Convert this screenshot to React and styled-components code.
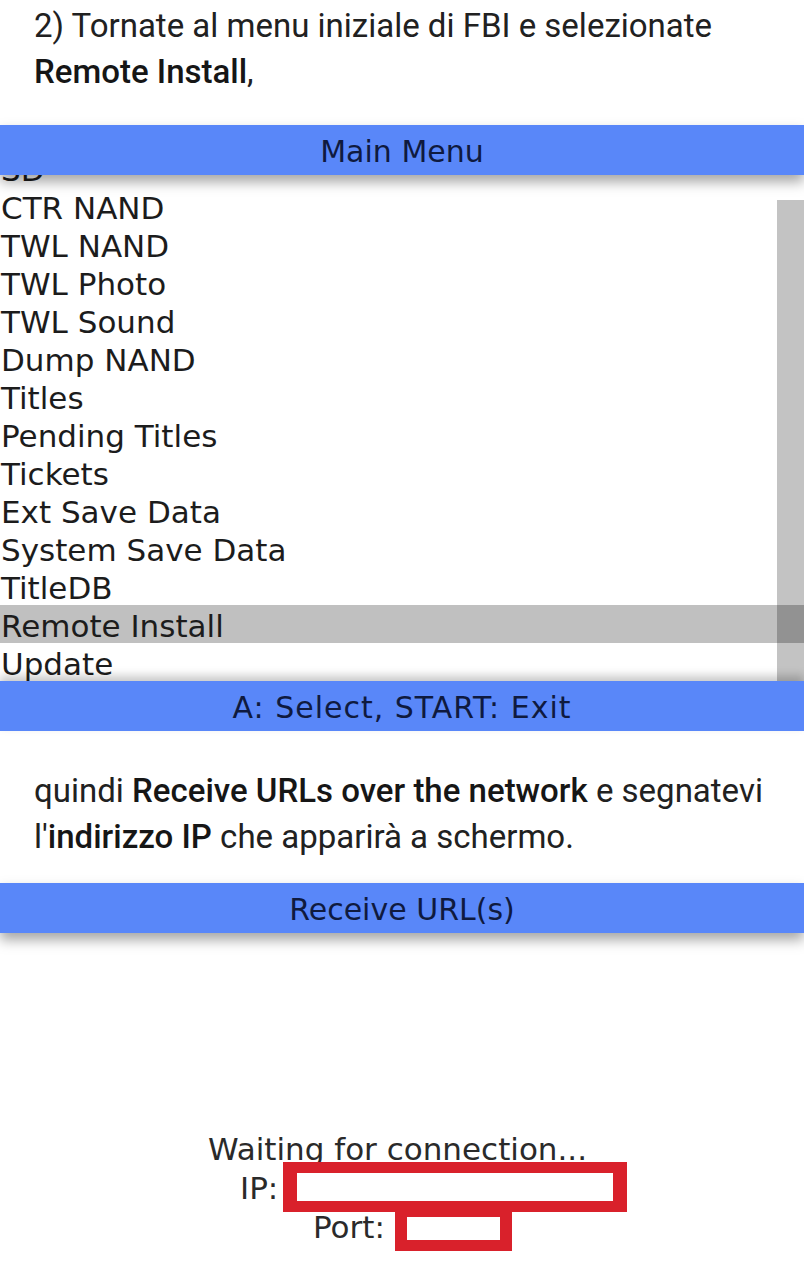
import React from "react";
import styled, { createGlobalStyle } from "styled-components";

const Global = createGlobalStyle`
  html, body { margin: 0; padding: 0; background: #fff; }
  body { width: 804px; overflow: hidden; font-family: Roboto, "Noto Sans", sans-serif; }
`;

const Page = styled.div`
  width: 804px;
  display: flex;
  flex-direction: column;
`;

const Para = styled.p`
  margin: ${(p) => p.$mt}px 0 ${(p) => p.$mb}px;
  padding: 0 10px 0 34px;
  font-size: 33px;
  line-height: 46px;
  color: #212121;
  white-space: nowrap;
  b { font-weight: 500; color: #161616; }
`;

const Screen = styled.div`
  display: flex;
  flex-direction: column;
  font-family: "DejaVu Sans", Verdana, sans-serif;
`;

const Bar = styled.div`
  position: relative;
  z-index: 2;
  height: 50px;
  background: #5987f9;
  color: #0f1a3f;
  font-size: 30px;
  line-height: 50px;
  padding-top: 2px;
  box-sizing: border-box;
  text-align: center;
  letter-spacing: ${(p) => p.$ls || 0}px;
  box-shadow: ${(p) =>
    p.$up ? "0 -5px 9px rgba(0,0,0,0.22)" : "0 7px 12px rgba(0,0,0,0.35)"};
`;

const Viewport = styled.div`
  height: 506px;
  display: flex;
  overflow: hidden;
  background: #fff;
`;

const Rows = styled.div`
  flex: 1;
  overflow: hidden;
`;

const RowList = styled.div`
  margin-top: -26px;
`;

const Row = styled.div`
  height: 38px;
  box-sizing: border-box;
  padding: 5px 0 0 1px;
  font-size: 31px;
  line-height: 33px;
  color: #1c1c1c;
  white-space: nowrap;
  background: ${(p) => (p.$sel ? "#c0c0c0" : "transparent")};
`;

const Track = styled.div`
  width: 27px;
  margin-top: 25px;
  background: #c3c3c3;
  display: flex;
  flex-direction: column;
`;

const Thumb = styled.div`
  margin-top: ${(p) => p.$top}px;
  height: ${(p) => p.$h}px;
  background: #929292;
`;

const Body = styled.div`
  height: 346px;
  background: #fff;
  display: flex;
  flex-direction: column;
  justify-content: flex-end;
`;

const Status = styled.div`
  position: relative;
  height: 149px;
  font-size: 31px;
  line-height: 39px;
  color: #2a2a2a;
`;

const Line = styled.div`
  padding-left: ${(p) => p.$x}px;
  white-space: nowrap;
`;

const Mark = styled.div`
  position: absolute;
  left: ${(p) => p.$x}px;
  top: ${(p) => p.$y}px;
  width: ${(p) => p.$w}px;
  height: ${(p) => p.$h}px;
  box-sizing: border-box;
  border-style: solid;
  border-color: #d9212b;
  border-width: ${(p) => p.$bw};
  background: #fff;
`;

const items = [
  "SD",
  "CTR NAND",
  "TWL NAND",
  "TWL Photo",
  "TWL Sound",
  "Dump NAND",
  "Titles",
  "Pending Titles",
  "Tickets",
  "Ext Save Data",
  "System Save Data",
  "TitleDB",
  "Remote Install",
  "Update",
  "",
];

export default function App() {
  return (
    <Page>
      <Global />
      <Para $mt={3} $mb={30}>
        2) Tornate al menu iniziale di FBI e selezionate
        <br />
        <b>Remote Install</b>,
      </Para>

      <Screen>
        <Bar>Main Menu</Bar>
        <Viewport>
          <Rows>
            <RowList>
              {items.map((t, i) => (
                <Row key={i} $sel={t === "Remote Install"}>
                  {t}
                </Row>
              ))}
            </RowList>
          </Rows>
          <Track>
            <Thumb $top={405} $h={38} />
          </Track>
        </Viewport>
        <Bar $up $ls={1}>A: Select, START: Exit</Bar>
      </Screen>

      <Para $mt={37} $mb={23}>
        quindi <b>Receive URLs over the network</b> e segnatevi
        <br />
        l'<b>indirizzo IP</b> che apparirà a schermo.
      </Para>

      <Screen>
        <Bar>Receive URL(s)</Bar>
        <Body>
          <Status>
            <Line $x={208}>Waiting for connection...</Line>
            <Line $x={240}>IP:</Line>
            <Line $x={313}>Port:</Line>
            <Mark $x={283} $y={32} $w={344} $h={50} $bw="11px 14px" />
            <Mark $x={395} $y={76} $w={117} $h={45} $bw="11px 12px" />
          </Status>
        </Body>
      </Screen>
    </Page>
  );
}
